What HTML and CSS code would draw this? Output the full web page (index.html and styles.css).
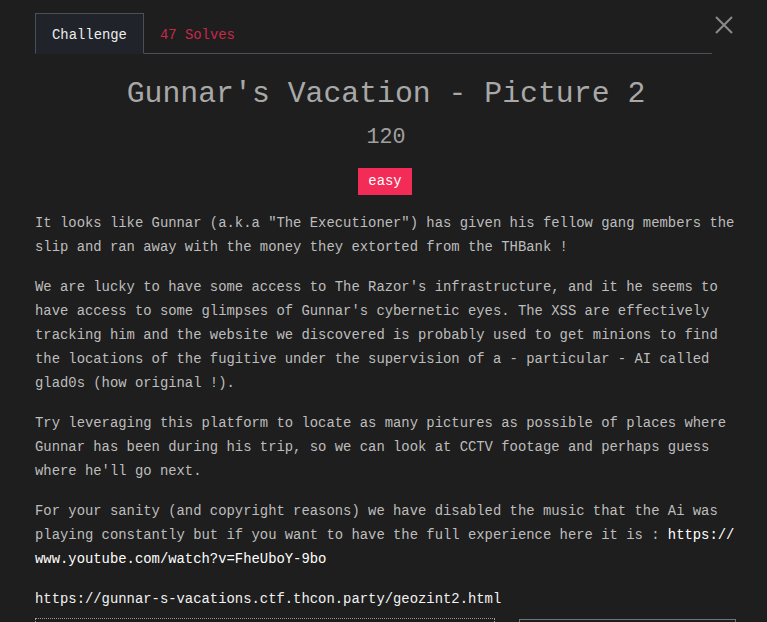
FILE: index.html
```html
<!DOCTYPE html>
<html lang="en">
<head>
<meta charset="utf-8">
<title>Gunnar's Vacation - Picture 2</title>
<link rel="stylesheet" href="styles.css">
</head>
<body>
<div class="modal">
  <div class="header">
    <ul class="tabs">
      <li class="tab active">Challenge</li>
      <li class="tab solves">47 Solves</li>
    </ul>
    <button class="close" aria-label="Close">
      <svg width="18" height="18" viewBox="0 0 18 18"><path d="M1 1 L17 17 M17 1 L1 17" stroke="#8a8a8a" stroke-width="2" fill="none"/></svg>
    </button>
  </div>
  <div class="body">
    <h2 class="title">Gunnar's Vacation - Picture 2</h2>
    <h3 class="value">120</h3>
    <div class="tags"><span class="badge">easy</span></div>
    <div class="desc">
      <p>It looks like Gunnar (a.k.a "The Executioner") has given his fellow gang members the slip and ran away with the money they extorted from the THBank !</p>
      <p>We are lucky to have some access to The Razor's infrastructure, and it he seems to have access to some glimpses of Gunnar's cybernetic eyes. The XSS are effectively tracking him and the website we discovered is probably used to get minions to find the locations of the fugitive under the supervision of a - particular - AI called glad0s (how original !).</p>
      <p>Try leveraging this platform to locate as many pictures as possible of places where Gunnar has been during his trip, so we can look at CCTV footage and perhaps guess where he'll go next.</p>
      <p>For your sanity (and copyright reasons) we have disabled the music that the Ai was playing constantly but if you want to have the full experience here it is : <a class="link" href="#">https://<wbr>www.youtube.com/watch?v=FheUboY-9bo</a></p>
      <p class="url">https://gunnar-s-vacations.ctf.thcon.party/geozint2.html</p>
    </div>
    <div class="submit-row">
      <div class="flag-input"></div>
      <div class="submit-btn"></div>
    </div>
  </div>
</div>
</body>
</html>
```

FILE: styles.css
```css
html, body {
  margin: 0;
  padding: 0;
  background: #1e1e1e;
  height: 100%;
  overflow: hidden;
}

body {
  font-family: "Liberation Mono", "DejaVu Sans Mono", monospace;
  font-size: 13.88px;
  color: #bdbdbd;
}

.modal {
  padding: 13px 0 0 35px;
}

.header {
  display: flex;
  align-items: flex-start;
  width: 698px;
}

.tabs {
  list-style: none;
  margin: 0;
  padding: 0;
  display: flex;
  flex: 1;
  border-bottom: 1px solid #4a5058;
}

.tab {
  height: 39px;
  line-height: 42px;
  padding: 0 16px;
  border: 1px solid transparent;
  margin-bottom: -1px;
}

.tab.active {
  background: #202329;
  border-color: #4a5058;
  border-bottom-color: #202329;
  color: #ececec;
}

.tab.solves {
  color: #c9284c;
  padding-left: 15px;
}

.close {
  background: none;
  border: 0;
  padding: 0;
  margin: 3px 0 0 3px;
  width: 18px;
  height: 18px;
  display: flex;
}

.body {
  width: 702px;
}

.title {
  margin: 22px 0 0;
  font-size: 29.8px;
  line-height: 36px;
  font-weight: normal;
  text-align: center;
  color: #a8a8a8;
}

.value {
  margin: 13px 0 0;
  font-size: 21.7px;
  line-height: 26px;
  font-weight: normal;
  text-align: center;
  color: #a0a0a0;
}

.tags {
  display: flex;
  justify-content: center;
  margin-top: 17px;
  padding-right: 2px;
}

.badge {
  background: #f22b57;
  color: #ffffff;
  line-height: 21px;
  padding: 3px 10px;
}

.desc {
  margin-top: 16px;
}

.desc p {
  margin: 0 0 16px;
  line-height: 24px;
}

.link {
  color: #ffffff;
  text-decoration: none;
}

.desc .url {
  color: #f2f2f2;
  margin-bottom: 0;
}

.submit-row {
  display: flex;
  margin-top: 7px;
  gap: 24px;
}

.flag-input {
  width: 458px;
  height: 38px;
  border: 1px dotted #9a9a9a;
}

.submit-btn {
  width: 215px;
  height: 38px;
  margin-top: 1px;
  border: 1px solid #6c757d;
}
```
